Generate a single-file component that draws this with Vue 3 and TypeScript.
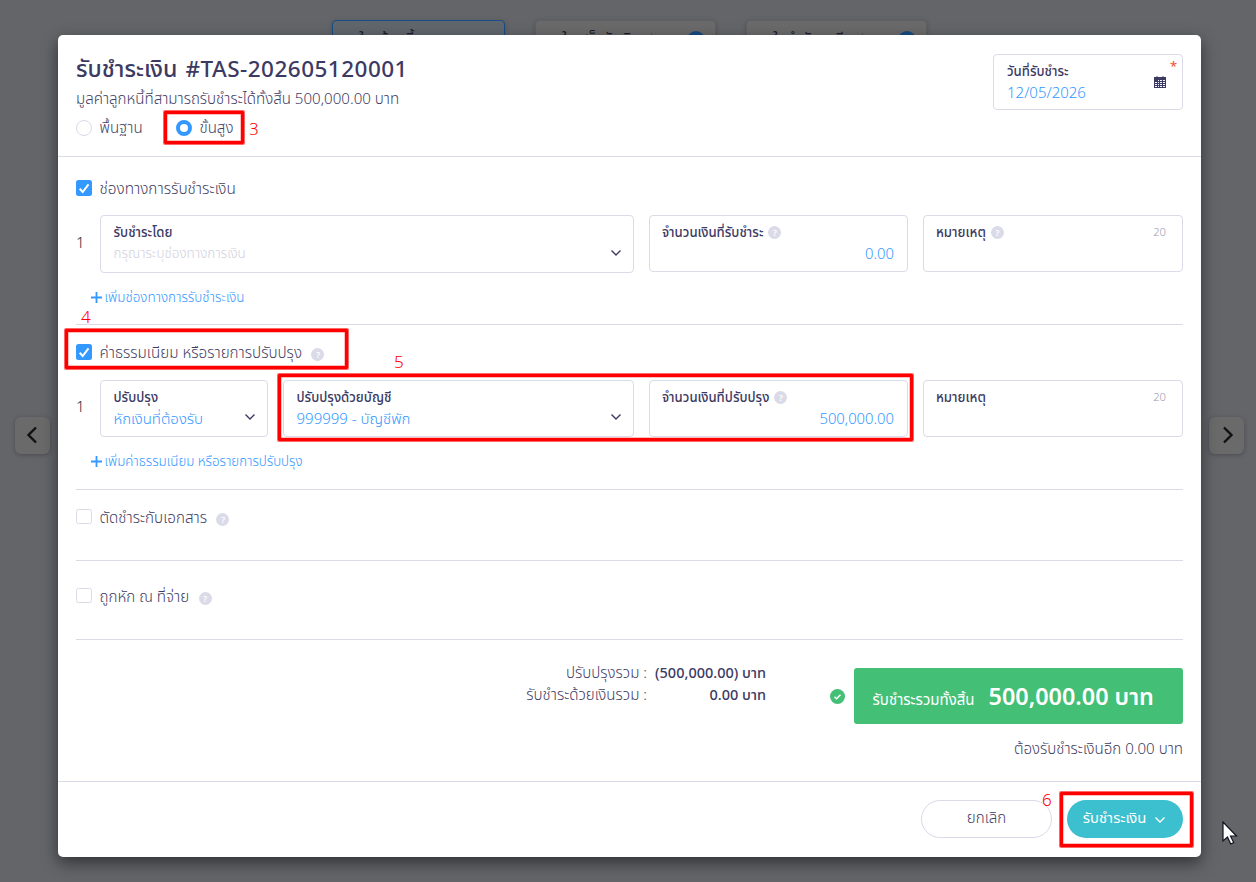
<script setup lang="ts">
import { ref } from 'vue'

interface Field {
  id: string
  size: string
  label: string
  value?: string
  placeholder?: string
  help?: boolean
  select?: boolean
  count?: number
}

interface Section {
  id: string
  title: string
  checked: boolean
  help?: boolean
  fields?: Field[]
  add?: string
}

const mode = ref<'basic' | 'advanced'>('advanced')

const sections = ref<Section[]>([
  {
    id: 'channel',
    title: 'ช่องทางการรับชำระเงิน',
    checked: true,
    add: 'เพิ่มช่องทางการรับชำระเงิน',
    fields: [
      { id: 'f1', size: 'wide', label: 'รับชำระโดย', placeholder: 'กรุณาระบุช่องทางการเงิน', select: true },
      { id: 'f2', size: 'amount', label: 'จำนวนเงินที่รับชำระ', value: '0.00', help: true },
      { id: 'f3', size: 'note', label: 'หมายเหตุ', help: true, count: 20 },
    ],
  },
  {
    id: 'fee',
    title: 'ค่าธรรมเนียม หรือรายการปรับปรุง',
    checked: true,
    help: true,
    add: 'เพิ่มค่าธรรมเนียม หรือรายการปรับปรุง',
    fields: [
      { id: 'f4', size: 'small', label: 'ปรับปรุง', value: 'หักเงินที่ต้องรับ', select: true },
      { id: 'f5', size: 'medium', label: 'ปรับปรุงด้วยบัญชี', value: '999999 - บัญชีพัก', select: true },
      { id: 'f6', size: 'amount', label: 'จำนวนเงินที่ปรับปรุง', value: '500,000.00', help: true },
      { id: 'f7', size: 'note', label: 'หมายเหตุ', count: 20 },
    ],
  },
  { id: 'document', title: 'ตัดชำระกับเอกสาร', checked: false, help: true },
  { id: 'withheld', title: 'ถูกหัก ณ ที่จ่าย', checked: false, help: true },
])

const steps = [
  { id: 's1', text: 'ใบแจ้งหนี้', active: true },
  { id: 's2', text: 'ใบเสร็จรับเงิน', active: false },
  { id: 's3', text: 'ใบกำกับภาษี', active: false },
]
</script>

<template>
  <div class="page">
    <div class="steps">
      <div v-for="s in steps" :key="s.id" class="step" :class="[s.id, { active: s.active }]">
        <span>{{ s.text }}</span>
        <i v-if="!s.active" class="bar"></i>
        <i v-if="!s.active" class="dot"></i>
      </div>
    </div>
    <button class="nav prev"><svg width="12" height="18" viewBox="0 0 12 18"><path d="M10 1.500 2.500 9l7.500 7.500" /></svg></button>
    <button class="nav next"><svg width="12" height="18" viewBox="0 0 12 18"><path d="M2 1.500 9.500 9 2 16.500" /></svg></button>

    <div class="modal">
      <header class="head">
        <div>
          <h1>รับชำระเงิน <span class="docno">#TAS-202605120001</span></h1>
          <p>มูลค่าลูกหนี้ที่สามารถรับชำระได้ทั้งสิ้น 500,000.00 บาท</p>
          <div class="radios">
            <label @click="mode = 'basic'"><i class="radio" :class="{ on: mode === 'basic' }"></i><span>พื้นฐาน</span></label>
            <label @click="mode = 'advanced'"><i class="radio" :class="{ on: mode === 'advanced' }"></i><span>ขั้นสูง</span></label>
          </div>
        </div>
        <div class="date">
          <div class="date-text">
            <b>วันที่รับชำระ</b>
            <span class="date-val">12/05/2026</span>
          </div>
          <svg class="cal" width="12" height="12" viewBox="0 0 12 12">
            <path d="M0 1h12v11H0z" fill="#3c3a63" />
            <path d="M2 0h2v1H2zM8 0h2v1H8z" fill="#a9a8ba" />
            <path d="M4 4h1v1H4zM6 4h2v1H6zM9 4h2v1H9zM1 6h2v1H1zM4 6h1v1H4zM6 6h2v1H6zM9 6h2v1H9zM1 8h2v1H1zM4 8h1v1H4zM6 8h2v1H6zM9 8h2v1H9zM1 10h2v1H1zM4 10h1v1H4zM6 10h2v1H6zM9 10h2v1H9z" fill="#f2f6fc" />
          </svg>
          <span class="req">*</span>
        </div>
      </header>

      <main class="body">
        <section v-for="s in sections" :key="s.id" :class="['sec', s.id]">
          <div class="check-row" @click="s.checked = !s.checked">
            <i class="box" :class="{ on: s.checked }">
              <svg v-if="s.checked" width="16" height="16" viewBox="0 0 16 16"><path d="m3.700 8.800 3 3.200 5.800-7.600" /></svg>
            </i>
            <span class="sec-title">{{ s.title }}</span>
            <span v-if="s.help" class="help">?</span>
          </div>
          <div v-if="s.fields" class="fields">
            <span class="num">1</span>
            <div v-for="f in s.fields" :key="f.id" :class="['field', f.size, f.id]">
              <div class="label">
                <b>{{ f.label }}</b>
                <span v-if="f.help" class="help">?</span>
                <span v-if="f.count" class="count">{{ f.count }}</span>
              </div>
              <div class="value" :class="{ ph: f.placeholder }">
                <span>{{ f.placeholder ?? f.value }}</span>
                <svg v-if="f.select" class="chev" width="12" height="8" viewBox="0 0 12 8"><path d="m1.500 1.500 4.500 4.500 4.500-4.500" /></svg>
              </div>
            </div>
          </div>
          <a v-if="s.add" class="add">
            <svg width="11" height="11" viewBox="0 0 11 11"><path d="M5.500 0v11M0 5.500h11" /></svg>
            <span>{{ s.add }}</span>
          </a>
        </section>

        <div class="summary">
          <dl>
            <dt>ปรับปรุงรวม :</dt><dd>(500,000.00) บาท</dd>
            <dt>รับชำระด้วยเงินรวม :</dt><dd>0.00 บาท</dd>
          </dl>
          <svg class="ok" width="15" height="15" viewBox="0 0 15 15"><circle cx="7.500" cy="7.500" r="7.500" fill="#44bf76" /><path d="m4.500 7.800 2 2 4-4" fill="none" stroke="#fff" stroke-width="1.500" /></svg>
          <div class="totals">
            <div class="total">
              <span class="total-label">รับชำระรวมทั้งสิ้น</span>
              <strong>500,000.00 บาท</strong>
            </div>
            <div class="remain">ต้องรับชำระเงินอีก 0.00 บาท</div>
          </div>
        </div>
      </main>

      <footer class="foot">
        <button class="cancel"><span>ยกเลิก</span></button>
        <button class="pay"><span>รับชำระเงิน</span><svg class="chev" width="12" height="8" viewBox="0 0 12 8"><path d="m1.500 1.500 4.500 4.500 4.500-4.500" /></svg></button>
      </footer>
    </div>

    <i class="mark m3"></i><span class="mnum n3">3</span>
    <i class="mark m4"></i><span class="mnum n4">4</span>
    <i class="mark m5"></i><span class="mnum n5">5</span>
    <i class="mark m6"></i><span class="mnum n6">6</span>
    <svg class="cursor" width="16" height="24" viewBox="0 0 16 24"><path d="M1 1v19l4.500-4 3.200 7 3-1.400-3.200-6.600h6z" fill="#fff" stroke="#111122" stroke-width="1.200" /></svg>
  </div>
</template>

<style>
body { background: #646569; overflow: hidden; }
</style>

<style scoped>
* { box-sizing: border-box; }
.page {
  position: relative; width: 1256px; height: 882px; overflow: hidden; background: #646569;
  font-family: "Noto Sans", "Noto Sans Thai", "Noto Sans Thai UI", sans-serif;
  font-weight: 300; font-size: 15.1px; color: #3f3d63;
}
span, h1, p, b, dt, dd, strong { white-space: nowrap; }
i { display: block; }
button { font: inherit; color: inherit; padding: 0; }

.steps { display: flex; padding: 20px 0 0 332px; }
.step { position: relative; height: 36px; width: 181px; margin-right: 30px; padding: 7px 0 0 26px; border: 1px solid #606064; border-radius: 4px; background: #6a6a6a; color: #1c1c2a; font-size: 15px; font-weight: 400; line-height: 20px; box-shadow: 0 1px 4px rgba(40, 40, 50, .3); }
.step.active { width: 173px; border-color: #174e87; background: #60666c; }
.bar { position: absolute; left: 115px; top: 12px; width: 1px; height: 12px; background: #555; }
.dot { position: absolute; right: 10px; top: 10px; width: 18px; height: 18px; border-radius: 50%; background: #174a80; }

.nav { position: absolute; top: 417px; width: 35px; height: 37px; display: flex; align-items: center; justify-content: center; padding-bottom: 2px; border: 0; border-radius: 6px; background: #6a6a6a; box-shadow: 0 1px 4px rgba(30, 30, 40, .35); }
.prev { left: 15px; padding-right: 2px; }
.next { left: 1209px; padding-left: 2px; }
.nav path { fill: none; stroke: #111114; stroke-width: 2.400; }

.modal { position: absolute; left: 58px; top: 35px; width: 1143px; height: 822px; display: flex; flex-direction: column; background: #fff; border-radius: 5px; box-shadow: 0 6px 16px rgba(0, 0, 0, .5); }
.head { height: 122px; display: flex; justify-content: space-between; padding: 19px 18px 0; border-bottom: 1px solid #dadae8; }
h1 { margin: 0; height: 29px; line-height: 28px; font-size: 23.200px; font-weight: 500; color: #3c3a63; }
.docno { margin-left: 2px; font-size: 22.500px; letter-spacing: .48px; }
p { margin: 0; height: 30px; line-height: 30px; }
.radios { display: flex; height: 30px; align-items: center; }
.radios label { display: flex; align-items: center; width: 100px; gap: 7.500px; }
.radio { width: 16px; height: 16px; border: 1px solid #dadae8; border-radius: 50%; }
.radio.on { border: 4px solid #3398ff; }
.date { position: relative; width: 190px; height: 56px; display: flex; border: 1px solid #dadae8; border-radius: 4px; padding: 6px 13px; }
.date-text { display: flex; flex-direction: column; }
.date-text b { height: 20px; line-height: 20px; font-size: 13.200px; font-weight: 500; color: #3c3a63; }
.date-val { line-height: 22px; color: #3398ff; font-size: 15px; }
.cal { position: absolute; left: 160px; top: 21px; }
.req { position: absolute; right: 5px; top: 2px; color: #f4583c; font-size: 13px; font-weight: 500; }

.body { padding: 0 18px; height: 624px; }
.sec { border-bottom: 1px solid #dadae8; }
.channel { height: 168px; padding-top: 21px; }
.fee { height: 165px; padding-top: 17px; }
.document { height: 71px; padding-top: 17px; }
.withheld { height: 79px; padding-top: 25px; }
.check-row { display: flex; align-items: center; height: 20px; }
.sec-title { padding-top: 2px; font-size: 15.200px; }
.channel .sec-title { font-size: 15.350px; }
.box { width: 16px; height: 16px; margin-right: 7.500px; border: 1px solid #dadae8; border-radius: 2.500px; }
.box:not(.on) { height: 15px; margin-bottom: 1px; }
.box.on { border: 0; background: #3398ff; }
.box path { fill: none; stroke: #fff; stroke-width: 2; }
.help { display: flex; align-items: center; justify-content: center; width: 13px; height: 13px; border-radius: 50%; background: #dadae8; color: #fff; font-size: 9px; font-weight: 600; line-height: 13px; }
.check-row .help { margin: 4px 0 0 9.500px; }
.fields { display: flex; margin-top: 17px; gap: 15px; height: 58px; }
.fee .fields { margin-top: 18px; height: 57px; }
.num { width: 9px; line-height: 54px; color: #2c2b38; }
.fee .num { line-height: 53px; }
.field { height: 57px; border: 1px solid #dadae8; border-radius: 4px; padding: 6px 13px 0 12px; }
.f1 { height: 58px; }
.wide { width: 534px; }
.small { width: 168px; }
.medium { width: 351px; }
.amount { width: 259px; }
.note { width: 260px; }
.wide, .small, .medium { padding: 6px 11px 0 12.500px; }
.label { display: flex; align-items: center; height: 20px; gap: 5px; font-size: 13.200px; color: #3c3a63; }
.label b { padding-top: 2px; font-weight: 500; }
.count { margin-left: auto; margin-right: 3px; margin-bottom: 1px; font-size: 11.200px; color: #9b9ab0; }
.value { display: flex; align-items: center; justify-content: space-between; height: 24px; color: #3398ff; font-size: 15px; }
.amount .value { justify-content: flex-end; height: 22px; font-size: 14.800px; }
.value.ph { height: 23px; color: #d2d1de; font-size: 13.450px; }
.chev path { fill: none; stroke: currentColor; stroke-width: 1.400; }
.value .chev { color: #3c3a63; margin-bottom: 1px; }
.fee .value .chev { margin-bottom: 4px; }
.add { display: flex; align-items: center; gap: 3px; height: 20px; margin: 14px 0 0 14.500px; color: #3398ff; font-size: 13.400px; }
.add span { padding-top: 2px; }
.fee .add { font-size: 13.300px; }
.add path { stroke: #3398ff; stroke-width: 1.800; }

.summary { display: flex; justify-content: flex-end; padding-top: 28px; }
dl { display: grid; grid-template-columns: 180px 119px; grid-auto-rows: 22px; margin: -7px 64px 0 0; line-height: 22px; text-align: right; }
dd { margin: 0; font-size: 14.500px; font-weight: 500; color: #3c3a63; }
.ok { margin: 21px 9px 0 0; }
.totals { width: 329px; }
.total { height: 56px; display: flex; align-items: center; gap: 14px; padding: 4px 0 0 18.500px; border-radius: 3px; background: #44bf76; color: #fff; }
.total-label { padding-top: 4px; font-weight: 400; font-size: 15px; }
.total strong { font-size: 23.400px; font-weight: 600; }
.remain { text-align: right; line-height: 48px; }

.foot { height: 76px; display: flex; gap: 15px; justify-content: flex-end; padding: 18px 18px 0; border-top: 1px solid #dadae8; }
.cancel, .pay { height: 38px; padding-bottom: 2px; border-radius: 19px; display: flex; align-items: center; justify-content: center; }
.cancel { width: 131px; border: 1px solid #dadae8; background: #fff; }
.pay { width: 116px; gap: 8px; padding-right: 1px; border: 0; background: #3cbfce; color: #fff; font-weight: 400; font-size: 14.900px; }
.pay .chev { margin-top: 3px; }

.mark { position: absolute; border: 3px solid #f00; border-radius: 1px; box-shadow: 0 0 0 1px rgba(255, 0, 0, .6), inset 0 0 0 .5px rgba(255, 0, 0, .5); }
.m3 { left: 164px; top: 111px; width: 80px; height: 33px; }
.m4 { left: 65px; top: 329px; width: 283px; height: 40px; }
.m5 { left: 278px; top: 374px; width: 635px; height: 67px; }
.m6 { left: 1060px; top: 792px; width: 133px; height: 55px; }
.mnum { position: absolute; color: #f00; font-size: 17px; line-height: 20px; }
.n3 { left: 249px; top: 119px; }
.n4 { left: 81px; top: 307px; }
.n5 { left: 394px; top: 352px; }
.n6 { left: 1042px; top: 790px; }
.cursor { position: absolute; left: 1222px; top: 821px; }
</style>
